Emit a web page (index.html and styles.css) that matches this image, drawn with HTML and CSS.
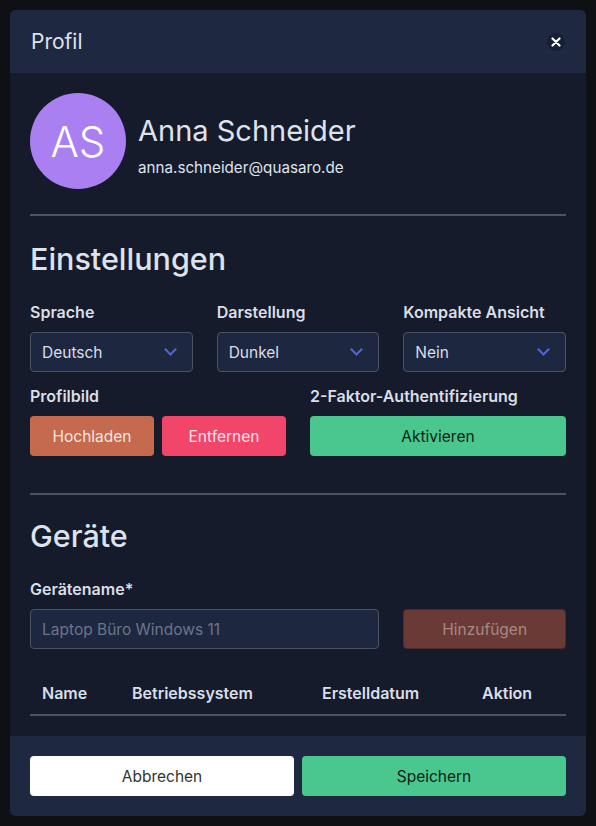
FILE: index.html
```html
<!DOCTYPE html>
<html lang="de">
<head>
    <meta charset="UTF-8">
    <meta name="viewport" content="width=device-width, initial-scale=1.0">
    <title>Profil</title>
    <link rel="stylesheet" href="styles.css">
</head>
<body>
    <div class="backdrop">
        <div class="modal">
            <div class="modal-header">
                <h2>Profil</h2>
                <button class="close-btn" aria-label="Schließen">
                    <svg width="10" height="10" viewBox="0 0 10 10"><path d="M1.5 1.5 L8.5 8.5 M8.5 1.5 L1.5 8.5" stroke="#fff" stroke-width="2.2" stroke-linecap="round"/></svg>
                </button>
            </div>

            <div class="modal-body">
                <div class="profile">
                    <div class="avatar">AS</div>
                    <div class="profile-info">
                        <div class="profile-name">Anna Schneider</div>
                        <div class="profile-mail">anna.schneider@quasaro.de</div>
                    </div>
                </div>

                <hr class="divider">

                <h3 class="section-title">Einstellungen</h3>
                <div class="grid-3">
                    <div class="field">
                        <label>Sprache</label>
                        <div class="select">Deutsch <span class="chev"></span></div>
                    </div>
                    <div class="field">
                        <label>Darstellung</label>
                        <div class="select">Dunkel <span class="chev"></span></div>
                    </div>
                    <div class="field">
                        <label>Kompakte Ansicht</label>
                        <div class="select">Nein <span class="chev"></span></div>
                    </div>
                </div>
                <div class="grid-2">
                    <div class="field">
                        <label>Profilbild</label>
                        <div class="btn-row">
                            <button class="btn btn-upload">Hochladen</button>
                            <button class="btn btn-remove">Entfernen</button>
                        </div>
                    </div>
                    <div class="field">
                        <label>2-Faktor-Authentifizierung</label>
                        <button class="btn btn-green btn-full">Aktivieren</button>
                    </div>
                </div>

                <hr class="divider divider-wide">

                <h3 class="section-title section-devices">Geräte</h3>
                <div class="field">
                    <label>Gerätename*</label>
                    <div class="grid-3">
                        <input class="text-input span-2" type="text" placeholder="Laptop Büro Windows 11">
                        <button class="btn btn-disabled" disabled>Hinzufügen</button>
                    </div>
                </div>

                <table class="devices">
                    <thead>
                        <tr>
                            <th class="col-name">Name</th>
                            <th class="col-os">Betriebssystem</th>
                            <th class="col-date">Erstelldatum</th>
                            <th>Aktion</th>
                        </tr>
                    </thead>
                </table>
            </div>

            <div class="modal-footer">
                <button class="btn btn-white">Abbrechen</button>
                <button class="btn btn-green">Speichern</button>
            </div>
        </div>
    </div>
</body>
</html>
```

FILE: styles.css
```css
* {
    box-sizing: border-box;
}
body {
    margin: 0;
    font-family: 'Inter', 'Noto Sans', sans-serif;
    background: #0f1013;
    color: #dde3ec;
}
.backdrop {
    padding: 10px;
    min-height: 100vh;
}
.modal {
    width: 576px;
    border-radius: 6px;
    overflow: hidden;
    background: #151b2a;
}
.modal-header {
    background: #1e2840;
    height: 63px;
    display: flex;
    align-items: center;
    justify-content: space-between;
    padding: 0 21px;
}
.modal-header h2 {
    margin: 0;
    font-size: 21px;
    font-weight: 400;
    color: #dde2ea;
}
.close-btn {
    width: 18px;
    height: 18px;
    border-radius: 50%;
    border: none;
    background: #152033;
    display: flex;
    align-items: center;
    justify-content: center;
    padding: 0;
}
.modal-body {
    padding: 20px 20px 20px;
}
.profile {
    display: flex;
    align-items: center;
    gap: 12px;
}
.avatar {
    width: 96px;
    height: 96px;
    border-radius: 50%;
    background: #a97ff1;
    color: #fff;
    font-size: 42px;
    font-weight: 300;
    display: flex;
    align-items: center;
    justify-content: center;
}
.profile-info {
    margin-top: 8px;
}
.profile-name {
    font-size: 29px;
    line-height: 34px;
    color: #dde3ec;
}
.profile-mail {
    font-size: 15.2px;
    margin-top: 10px;
    color: #dde3ec;
}
.divider {
    border: none;
    height: 2px;
    background: #4b5363;
    margin: 25px 0 0;
}
.divider-wide {
    margin-top: 37px;
}
.section-title {
    font-size: 30.5px;
    font-weight: 500;
    margin: 25px 0 26px;
    line-height: 36px;
}
.section-devices {
    margin-top: 23px;
}
.grid-3 {
    display: grid;
    grid-template-columns: repeat(3, 1fr);
    gap: 24px;
}
.grid-2 {
    display: grid;
    grid-template-columns: 1fr 1fr;
    gap: 24px;
    margin-top: 15px;
}
.span-2 {
    grid-column: span 2;
}
.field {
    display: flex;
    flex-direction: column;
}
.field label {
    font-size: 16px;
    font-weight: 600;
    color: #d9dee7;
    line-height: 18px;
    margin-bottom: 11px;
}
.select {
    height: 40px;
    border: 1px solid #4a5363;
    border-radius: 4px;
    background: #1e2740;
    display: flex;
    align-items: center;
    justify-content: space-between;
    padding: 0 17px 0 11px;
    font-size: 15.5px;
    color: #d9dee7;
}
.chev {
    width: 9px;
    height: 9px;
    border-right: 2.5px solid #5068dc;
    border-bottom: 2.5px solid #5068dc;
    transform: rotate(45deg);
    margin-top: -5px;
}
.btn {
    height: 40px;
    border: none;
    border-radius: 4px;
    font-family: inherit;
    font-size: 15.5px;
    cursor: pointer;
}
.btn-row {
    display: flex;
    gap: 8px;
}
.btn-upload {
    width: 124px;
    background: #c5694f;
    color: #f3e6e0;
}
.btn-remove {
    width: 124px;
    background: #f1466a;
    color: #fbe4ea;
}
.btn-green {
    background: #49c78f;
    color: #0b1c14;
}
.btn-full {
    width: 100%;
}
.btn-disabled {
    background: #6a3a36;
    color: #a78884;
    border: 1px solid #4e2b2a;
    cursor: default;
}
.btn-white {
    background: #fff;
    color: #333;
}
.text-input {
    height: 40px;
    border: 1px solid #4a5363;
    border-radius: 4px;
    background: #1e2740;
    font-family: inherit;
    font-size: 15.5px;
    padding: 0 11px;
    color: #d9dee7;
}
.text-input::placeholder {
    color: #6b7588;
}
.devices {
    width: 100%;
    border-collapse: collapse;
    margin-top: 22px;
}
.devices th {
    text-align: left;
    font-size: 16px;
    font-weight: 600;
    color: #d9dee7;
    padding: 12px 12px 11px;
    border-bottom: 2px solid #4b5363;
}
.devices .col-name {
    width: 90px;
}
.devices .col-os {
    width: 190px;
}
.devices .col-date {
    width: 160px;
}
.modal-footer {
    background: #1e2840;
    padding: 20px;
    display: grid;
    grid-template-columns: 1fr 1fr;
    gap: 8px;
}
```
